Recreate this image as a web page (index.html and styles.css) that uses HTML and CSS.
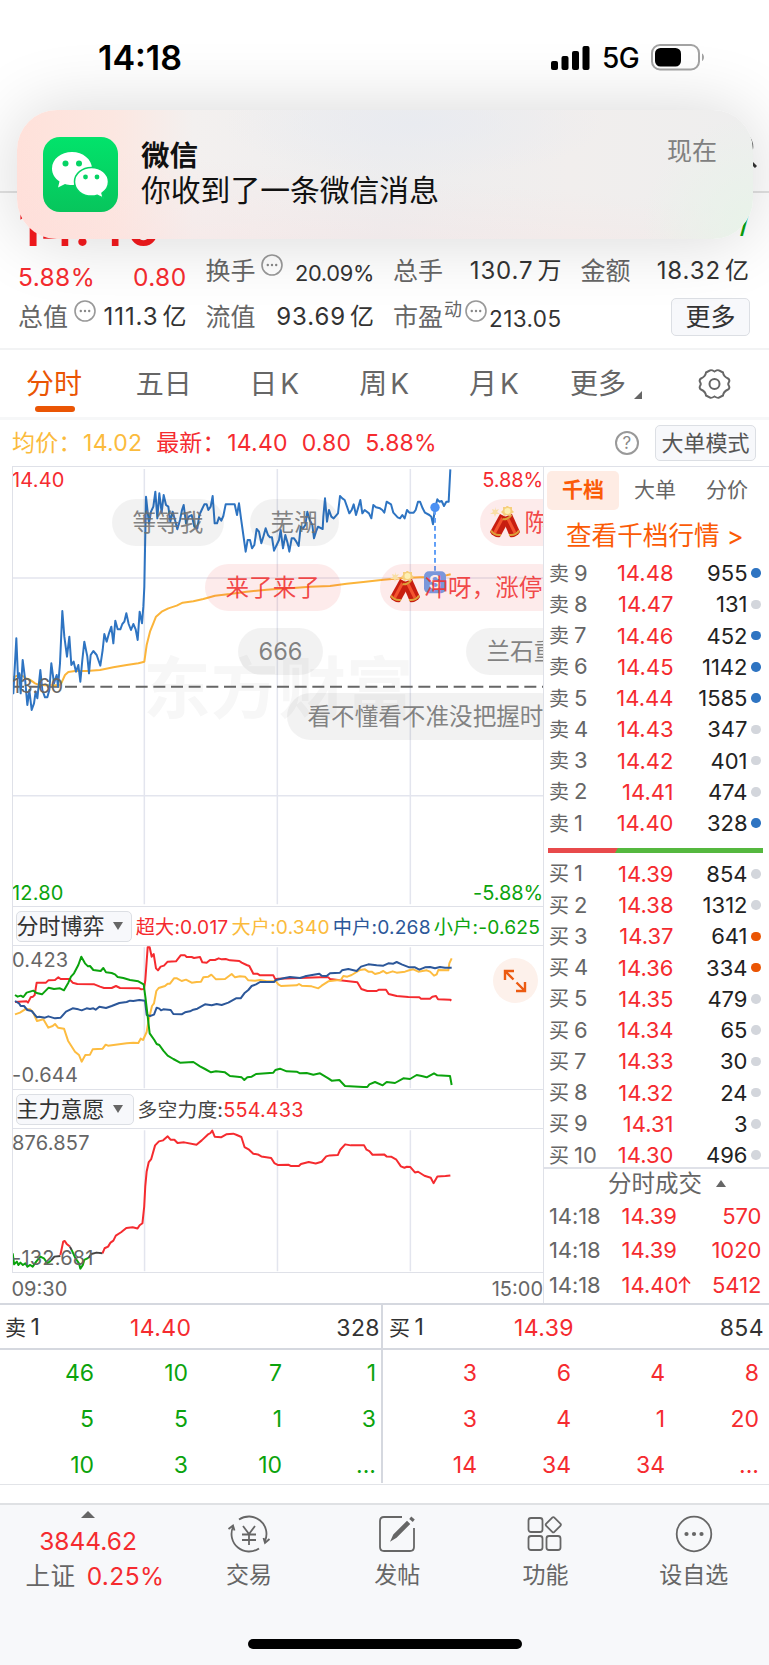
FILE: index.html
```html
<!DOCTYPE html>
<html lang="zh-CN">
<head>
  <meta charset="UTF-8" />
  <title>分时行情</title>
  <link rel="stylesheet" href="styles.css">
</head>
<body>
  <svg class="defs">
    <symbol id="dots" viewBox="0 0 22 22">
      <circle cx="11" cy="11" r="10" fill="none" stroke="#999" stroke-width="1.6" />
      <circle cx="6.8" cy="11" r="1.2" fill="#888" /><circle cx="11" cy="11" r="1.2" fill="#888" /><circle cx="15.2" cy="11" r="1.2" fill="#888" />
    </symbol>
    <symbol id="cracker" viewBox="0 0 30 32">
      <path d="M5 1l1 3 3-1-2 3 3 2-4 0-1 3-1-3-4 0 3-2-1-3 3 1z" fill="#f9dfa6" />
      <path d="M10 8l10 5-10 18c-3 1-8-1-10-5z" fill="#c81e10" />
      <path d="M12.500 12l-8 15" stroke="#f4532f" stroke-width="3" />
      <path d="M1 24.500c2 3.500 6 5 10 4.500" fill="none" stroke="#dda03a" stroke-width="2" />
      <path d="M12 12l10-4 8 18c-2 4-7 6-10 5z" fill="#c81e10" />
      <path d="M18 13l7 14" stroke="#f4532f" stroke-width="3" />
      <path d="M29 24.500c-2 3.500-6 5-10 4.500M12.500 13c3 1 7-1 9-4" fill="none" stroke="#dda03a" stroke-width="2" />
      <path d="M17 -1l2 2 3 0 0 3 2 2-3 2-1 2-3-1-3 1-1-2-2-2 2-2 0-3 3 0z" fill="#f6cf7c" />
      <circle cx="17.500" cy="5" r="3" fill="#fdf0b4" />
    </symbol>
  </svg>

  <header>
    <div class="status">
      <span class="clock">14:18</span>
      <svg class="signal" width="39" height="24" viewBox="0 0 39 24"><rect x="0" y="15" width="7" height="9" rx="2" /><rect x="10.500" y="10" width="7" height="14" rx="2" /><rect x="21" y="5" width="7" height="19" rx="2" /><rect x="31.500" y="0" width="7" height="24" rx="2" /></svg>
      <span class="net">5G</span>
      <svg class="battery" width="55" height="27" viewBox="0 0 55 27"><rect x="1" y="1" width="47" height="24.500" rx="8" fill="none" stroke="#a3a3a3" stroke-width="2" /><rect x="4" y="4" width="26" height="18.500" rx="5.500" /><path d="M51 9.500c2.600 1 2.600 6.500 0 7.500z" fill="#a3a3a3" /></svg>
    </div>
    <div class="titlebar">
      <svg width="40" height="46" viewBox="0 0 40 46"><circle cx="19" cy="18" r="16" fill="none" stroke="#333" stroke-width="2.500" /><path d="M30 29l9 9" stroke="#333" stroke-width="3" /></svg>
    </div>
    <div class="last"><span>14.40</span><i>/</i></div>
    <div class="stats">
      <div class="cell red low"><span>5.88%</span><span>0.80</span></div>
      <div class="cell"><label>换手<svg class="dots up"><use href="#dots" /></svg></label><span class="small">20.09%</span></div>
      <div class="cell"><label>总手</label><span>130.7<em>万</em></span></div>
      <div class="cell"><label>金额</label><span>18.32<em>亿</em></span></div>
      <div class="cell"><label>总值<svg class="dots"><use href="#dots" /></svg></label><span>111.3<em>亿</em></span></div>
      <div class="cell"><label>流值</label><span>93.69<em>亿</em></span></div>
      <div class="cell"><label>市盈<sup>动</sup><svg class="dots pe"><use href="#dots" /></svg></label><span class="small wide">213.05</span></div>
      <div class="cell end"><button class="more">更多</button></div>
    </div>
  </header>

  <div class="notice">
    <svg class="wechat" width="75" height="75" viewBox="0 0 75 75">
      <defs><linearGradient id="wx" x1="0" y1="0" x2="0" y2="1"><stop offset="0" stop-color="#02e36b" /><stop offset="1" stop-color="#07c55c" /></linearGradient></defs>
      <rect width="75" height="75" rx="17" fill="url(#wx)" />
      <path d="M29 15c-11 0-20 7-20 16.500 0 5.500 3 10 7.500 13L15 50.500l7-3.500c2 .6 4.500 1 7 1 11 0 20-7.500 20-16.500S40 15 29 15z" fill="#fff" />
      <path d="M48.500 30.500c-9.500 0-17 6.300-17 14.300s7.500 14.300 17 14.300c2 0 4-.3 5.800-.9l6 3-1.300-5c4-2.700 6.500-6.800 6.500-11.400 0-8-7.500-14.300-17-14.300z" fill="#fff" stroke="#05d364" stroke-width="1.500" />
      <g fill="#05d364"><circle cx="22.500" cy="26.500" r="3" /><circle cx="36" cy="26.500" r="3" /><circle cx="42.500" cy="40" r="2.400" /><circle cx="54" cy="40" r="2.400" /></g>
    </svg>
    <div class="msg"><b>微信</b><p>你收到了一条微信消息</p></div>
    <time>现在</time>
  </div>

  <nav class="tabs">
    <a class="on">分时</a><a>五日</a><a class="k">日K</a><a class="k">周K</a><a class="k">月K</a><a>更多<i class="corner"></i></a>
    <a><svg width="33" height="32" viewBox="0 0 33 32" fill="none" stroke="#666" stroke-width="2"><path d="M12 2.500Q13 1.500 16.500 3.500 20 1.500 21 2.500L25 4.500Q25.500 8.500 30 10.500 32 11.500 31 14 29.500 16 31 18 32 20.500 30 21.500 25.500 23.500 25 27.500L21 29.500Q20 30.500 16.500 28.500 13 30.500 12 29.500L8 27.500Q7.500 23.500 3 21.500 1 20.500 2 18 3.500 16 2 14 1 11.500 3 10.500 7.500 8.500 8 4.500Z" /><circle cx="16.500" cy="16" r="5" /></svg></a>
  </nav>

  <div class="legend">
    <span class="avg">均价：<u>14.02</u></span>
    <span class="red">最新：<u>14.40</u></span><span class="red">0.80</span><span class="red">5.88%</span>
    <span class="help">?</span>
    <button class="mode">大单模式</button>
  </div>

  <main>
    <section class="charts">
      <div class="plot price">
        <svg viewBox="36 18 1596 1320">
          <text class="mark" x="430" y="760" textLength="810">东方财富</text>
          <path class="grid" d="M433 27V1333M832 27V1333M1231 27V1333M36 354H1632M36 1007H1632" />
          <path d="M36 680H1632" stroke="#666" stroke-width="6" stroke-dasharray="36 17" />
          <polyline class="line" stroke="#fbb43a" points="40,652 50,648 58,645 68,648 78,655 88,658 98,665 105,670 115,674 135,676 160,676 180,676 186,665 195,645 205,636 225,633 260,633 300,630 340,622 380,615 415,610 433,605 440,555 450,515 460,490 468,470 485,455 505,445 530,437 548,428 580,424 610,417 645,407 690,402 740,395 800,389 840,386 880,384 930,380 990,378 1040,371 1090,366 1150,359 1210,354 1260,352 1300,352 1340,346 1352,343" />
          <polyline class="line" stroke="#2e74c2" points="40,655 40,700 49,535 54,655 58,640 62,700 68,600 75,655 82,735 88,690 95,750 102,730 107,695 112,715 121,630 127,690 135,712 142,712 148,690 154,610 162,670 170,645 174,680 180,610 187,453 193,530 201,590 208,530 214,615 221,605 228,635 235,615 241,665 247,600 253,545 262,590 267,640 272,585 280,573 290,585 301,617 308,570 313,522 320,545 327,520 334,500 340,550 346,482 353,508 361,508 367,492 373,485 379,460 386,492 393,510 400,492 407,508 413,540 419,455 426,490 430,440 433,380 438,110 444,165 447,190 453,155 460,140 466,95 472,175 478,100 485,158 491,105 498,135 505,140 511,185 518,155 525,180 532,208 540,180 546,150 551,135 558,190 566,170 575,165 583,200 592,205 598,165 605,150 613,133 620,133 625,150 632,140 638,108 644,190 651,190 657,172 664,182 670,168 677,133 704,133 711,165 717,130 723,175 730,225 737,275 743,240 750,240 756,265 763,255 770,207 777,215 784,250 790,230 797,205 804,225 810,232 816,232 822,272 830,255 837,240 842,210 849,265 856,225 863,250 868,275 875,235 882,235 889,245 896,258 902,200 909,205 916,195 922,155 929,180 937,195 942,235 948,215 954,200 968,207 970,170 975,115 981,185 987,150 994,170 1001,175 1014,160 1020,108 1027,115 1034,120 1041,140 1048,160 1055,150 1061,133 1068,165 1074,145 1081,120 1087,160 1094,150 1107,160 1114,175 1120,135 1128,142 1140,145 1147,150 1153,158 1160,125 1173,133 1180,158 1193,172 1200,175 1207,165 1214,175 1221,150 1228,158 1241,158 1247,150 1254,125 1260,125 1268,145 1275,158 1288,165 1294,170 1299,193 1304,150 1312,118 1318,125 1325,123 1332,138 1339,125 1346,125 1351,28" />
          <path d="M1305 150V335" stroke="#62a0f7" stroke-width="6" stroke-dasharray="14 10" />
          <circle cx="1305" cy="142" r="14" fill="#4a90f3" />
          <rect x="1272" y="334" width="66" height="66" rx="15" fill="#6ea2ee" />
          <text x="1286" y="387" class="flag">S</text>
        </svg>
        <span class="tl red">14.40</span><span class="tr red">5.88%</span>
        <span class="ml">13.60</span>
        <span class="bl green">12.80</span><span class="br green">-5.88%</span>
        <div class="bullets">
          <span style="left:99px; top:32px">等等我</span>
          <span style="left:237px; top:32px">芜湖</span>
          <span class="hot gift" style="left:467px; top:32px"><svg><use href="#cracker" /></svg>陈小群</span>
          <span class="hot" style="left:192px; top:97px">来了来了</span>
          <span class="hot gift" style="left:367px; top:97px"><svg><use href="#cracker" /></svg>冲呀，涨停</span>
          <span style="left:225px; top:161px">666</span>
          <span style="left:453px; top:161px">兰石重装</span>
          <span style="left:274px; top:226px">看不懂看不准没把握时</span>
        </div>
      </div>

      <div class="bar">
        <button class="pick">分时博弈<i></i></button>
        <span class="red">超大:0.017</span><span class="avg">大户:0.340</span><span class="navy">中户:0.268</span><span class="green">小户:-0.625</span>
      </div>
      <div class="plot sub">
        <svg viewBox="36 195 1596 435">
          <path class="grid" d="M433 202V625M832 202V625M1231 202V625" />
          <polyline class="line" stroke="#f52b2f" points="45,366 80,364 84,368 92,352 99,350 104,345 110,308 138,308 145,301 165,300 175,292 182,297 208,297 218,308 232,312 283,313 300,320 312,324 335,324 348,318 360,324 418,325 424,328 432,327 436,300 443,202 449,202 455,230 461,222 468,265 474,271 482,260 492,257 503,245 528,244 542,226 555,226 560,231 575,231 582,234 600,231 607,247 620,248 630,240 645,240 656,235 665,238 677,237 690,241 718,243 725,248 740,255 748,258 760,281 772,281 780,286 820,286 826,298 835,296 960,292 985,292 990,297 1020,301 1072,307 1084,327 1102,333 1130,333 1137,329 1158,329 1166,342 1190,348 1225,351 1258,352 1263,356 1290,356 1297,350 1308,348 1314,358 1350,359 1354,362" />
          <polyline class="line" stroke="#fdbc40" points="45,403 60,398 75,388 90,388 98,395 111,423 130,418 145,443 158,438 165,432 174,443 192,446 204,482 225,515 237,525 245,545 256,525 270,524 278,508 308,506 317,494 324,497 380,490 400,488 415,489 422,476 429,480 440,456 446,420 456,378 462,370 469,333 476,324 495,318 503,311 510,311 522,295 531,295 545,303 558,299 575,308 590,306 603,305 610,292 625,290 634,284 648,298 675,297 695,282 705,292 720,289 735,290 745,301 765,302 780,300 800,304 828,304 835,313 843,318 890,316 897,312 905,317 935,319 955,325 965,317 985,304 1010,301 1022,301 1030,288 1042,290 1055,285 1080,270 1095,268 1105,275 1115,275 1125,282 1140,278 1150,273 1160,280 1178,274 1190,278 1215,275 1230,270 1240,268 1255,275 1280,271 1290,275 1302,287 1310,283 1315,270 1345,271 1348,250 1355,235" />
          <polyline class="line" stroke="#2c5799" points="45,363 57,370 62,378 72,378 82,390 95,393 111,412 118,410 135,413 145,409 165,415 182,413 198,395 218,385 235,388 245,391 260,385 270,387 280,385 287,389 298,380 318,384 335,378 358,369 380,366 390,362 400,363 418,360 435,362 440,405 450,408 462,404 470,383 478,386 483,391 490,388 512,390 520,402 545,403 555,397 570,394 580,389 592,386 615,373 635,376 650,372 665,375 685,368 708,355 722,355 733,340 745,330 755,318 768,313 780,306 822,306 828,300 850,295 870,291 900,294 915,289 958,281 965,287 980,288 990,280 1020,278 1026,271 1045,267 1070,273 1083,260 1105,253 1130,256 1150,257 1165,250 1180,251 1190,246 1205,253 1228,262 1245,262 1258,269 1275,262 1290,261 1305,265 1320,261 1335,263 1355,263" />
          <polyline class="line" stroke="#0ba30d" points="45,345 53,350 62,347 70,351 80,338 100,332 110,339 126,343 146,323 162,327 180,325 192,331 205,308 213,290 222,280 235,255 244,230 255,250 264,259 270,258 280,270 302,273 310,264 318,277 335,279 345,283 353,291 370,294 390,300 415,304 431,313 436,350 442,400 449,460 463,480 470,492 478,495 490,512 503,527 520,537 540,548 580,546 600,559 615,567 633,577 648,574 675,577 690,588 712,590 725,592 733,600 742,592 755,590 768,582 820,578 826,570 840,566 860,574 890,575 900,580 920,579 940,584 960,580 985,595 995,602 1018,600 1035,618 1090,621 1102,621 1108,613 1125,606 1148,616 1160,606 1185,609 1210,595 1230,597 1250,585 1265,588 1280,592 1302,580 1312,586 1350,588 1355,615" />
        </svg>
        <span class="tl">0.423</span><span class="bl">-0.644</span>
        <div class="expand"><svg width="24" height="24" viewBox="0 0 24 24" fill="none" stroke="#ec5b12" stroke-width="2.400"><path d="M2 11V2h9M2 2l8.500 8.500M22 13v9h-9M22 22l-8.500-8.500" /></svg></div>
      </div>

      <div class="bar">
        <button class="pick">主力意愿<i></i></button>
        <span class="dark">多空力度:<b class="red">554.433</b></span>
      </div>
      <div class="plot sub will">
        <svg viewBox="34 115 1517 434" preserveAspectRatio="none">
          <path class="grid" d="M412 122V544M791 122V544M1170 122V544" />
          <polyline class="line" stroke="#0ba30d" points="36,490 40,523 48,515 52,525 58,518 65,525 72,520 78,530 86,525 93,530 103,515 115,500 125,505 135,520 145,512" />
          <polyline class="line" stroke="#444" points="145,512 155,500 172,498" />
          <polyline class="line" stroke="#f52b2f" points="172,495 180,455 184,453 190,462 199,470" />
          <polyline class="line" stroke="#444" points="199,470 204,480" />
          <polyline class="line" stroke="#0ba30d" points="204,480 215,505 225,520 229,536 236,525 240,510 252,504" />
          <polyline class="line" stroke="#444" points="252,504 260,492 275,488 292,490" />
          <polyline class="line" stroke="#f52b2f" points="292,490 298,475 308,470 315,458 323,452 330,437 345,427 360,414 378,412 392,416 398,406 406,400 411,350 414,290 418,245 424,217 431,208 442,167 453,155 465,152 478,140 486,150 497,150 506,160 525,158 560,165 575,152 592,135 600,130 605,123 612,141 630,143 645,134 665,132 675,136 688,142 697,172 710,180 722,192 735,194 745,200 773,205 782,220 793,226 822,225 830,229 852,229 858,223 880,217 900,221 917,216 930,200 940,197 963,196 970,180 984,164 1000,167 1038,167 1045,180 1053,184 1062,195 1095,194 1102,200 1115,201 1130,210 1143,230 1153,234 1160,231 1170,232 1183,248 1192,246 1210,258 1228,264 1236,280 1247,260 1270,259 1284,257" />
        </svg>
        <span class="tl">876.857</span><span class="bl">-132.681</span>
      </div>
      <div class="times"><span>09:30</span><span>15:00</span></div>
    </section>

    <aside>
      <div class="modes"><b>千档</b><span>大单</span><span>分价</span></div>
      <div class="all">查看千档行情 <span>&gt;</span></div>
      <ul class="book">
        <li><span>卖<u>9</u></span><b>14.48</b><em>955</em><i class="blue"></i></li>
        <li><span>卖<u>8</u></span><b>14.47</b><em>131</em><i></i></li>
        <li><span>卖<u>7</u></span><b>14.46</b><em>452</em><i class="blue"></i></li>
        <li><span>卖<u>6</u></span><b>14.45</b><em>1142</em><i class="blue"></i></li>
        <li><span>卖<u>5</u></span><b>14.44</b><em>1585</em><i class="blue"></i></li>
        <li><span>卖<u>4</u></span><b>14.43</b><em>347</em><i></i></li>
        <li><span>卖<u>3</u></span><b>14.42</b><em>401</em><i></i></li>
        <li><span>卖<u>2</u></span><b>14.41</b><em>474</em><i></i></li>
        <li><span>卖<u>1</u></span><b>14.40</b><em>328</em><i class="blue"></i></li>
      </ul>
      <div class="ratio"></div>
      <ul class="book buy">
        <li><span>买<u>1</u></span><b>14.39</b><em>854</em><i></i></li>
        <li><span>买<u>2</u></span><b>14.38</b><em>1312</em><i></i></li>
        <li><span>买<u>3</u></span><b>14.37</b><em>641</em><i class="orange"></i></li>
        <li><span>买<u>4</u></span><b>14.36</b><em>334</em><i class="orange"></i></li>
        <li><span>买<u>5</u></span><b>14.35</b><em>479</em><i></i></li>
        <li><span>买<u>6</u></span><b>14.34</b><em>65</em><i></i></li>
        <li><span>买<u>7</u></span><b>14.33</b><em>30</em><i></i></li>
        <li><span>买<u>8</u></span><b>14.32</b><em>24</em><i></i></li>
        <li><span>买<u>9</u></span><b>14.31</b><em>3</em><i></i></li>
        <li><span>买<u>10</u></span><b>14.30</b><em>496</em><i></i></li>
      </ul>
      <div class="deals-title">分时成交<i></i></div>
      <ul class="deals">
        <li><span>14:18</span><b>14.39</b><em>570</em></li>
        <li><span>14:18</span><b>14.39</b><em>1020</em></li>
        <li><span>14:18</span><b>14.40<svg width="13" height="17" viewBox="0 0 13 17" fill="none" stroke="#f52b2f" stroke-width="1.800"><path d="M6.500 17V2M1 7.500l5.500-6 5.500 6" /></svg></b><em>5412</em></li>
      </ul>
    </aside>
  </main>

  <div class="queue">
    <div class="side">
      <div class="head"><span>卖<u>1</u></span><b>14.40</b><em>328</em></div>
      <div class="nums green"><span>46</span><span>10</span><span>7</span><span>1</span><span>5</span><span>5</span><span>1</span><span>3</span><span>10</span><span>3</span><span>10</span><span>...</span></div>
    </div>
    <div class="side">
      <div class="head"><span>买<u>1</u></span><b>14.39</b><em>854</em></div>
      <div class="nums red"><span>3</span><span>6</span><span>4</span><span>8</span><span>3</span><span>4</span><span>1</span><span>20</span><span>14</span><span>34</span><span>34</span><span>...</span></div>
    </div>
  </div>

  <footer>
    <div class="tabbar">
      <div class="index"><i></i><b>3844.62</b><span>上证 <em>0.25%</em></span></div>
      <div class="item"><svg width="44" height="38" viewBox="0 0 44 38"><path d="M12 4.600A17.500 17.500 0 0 1 38 26M32 33.400A17.500 17.500 0 0 1 6 12M1.500 14l4.500-3.500 1.500 5M42.500 24l-4.500 4-1.500-5" /><path d="M16 11l6 8 6-8M15 19.500h14M15 25h14M22 19v11" /></svg><span>交易</span></div>
      <div class="item"><svg width="38" height="38" viewBox="0 0 38 38"><path d="M24 2H6q-4 0-4 4v26q0 4 4 4h26q4 0 4-4V13" /><path d="M14 24.500L16 20 29 7 31 9 18 22z" fill="#666" /><path d="M33 5.500l2-2.500" stroke-width="4.500" /></svg><span>发帖</span></div>
      <div class="item"><svg width="36" height="38" viewBox="0 0 36 38"><rect x="1.500" y="3" width="14" height="14" rx="2.500" /><rect x="1.500" y="21" width="14" height="14" rx="2.500" /><rect x="19.500" y="21" width="14" height="14" rx="2.500" /><rect x="20.500" y="4" width="11.500" height="11.500" rx="1.500" transform="rotate(45 26.300 9.800)" /></svg><span>功能</span></div>
      <div class="item"><svg width="38" height="38" viewBox="0 0 38 38"><circle cx="19" cy="19" r="17.300" /><g fill="#666" stroke="none"><circle cx="11.500" cy="19" r="2.100" /><circle cx="19" cy="19" r="2.100" /><circle cx="26.500" cy="19" r="2.100" /></g></svg><span>设自选</span></div>
    </div>
    <div class="home"></div>
  </footer>
</body>
</html>
```
FILE: styles.css
```css
* {
  box-sizing: border-box;
}
body {
  margin: 0;
  width: 769px;
  height: 1665px;
  position: relative;
  overflow: hidden;
  background: #fff;
  color: #333;
  font-family: Inter, "Noto Sans CJK SC", sans-serif;
  font-size: 22px;
  line-height: 30px;
}
ul, p {
  margin: 0;
  padding: 0;
  list-style: none;
}
i, em {
  font-style: normal;
}
u {
  text-decoration: none;
}
button {
  font: inherit;
  padding: 0;
  color: #333;
  background: #f7f8fb;
  border: 1.5px solid #dcdfe4;
  border-radius: 5px;
  white-space: nowrap;
}
.defs {
  position: absolute;
  width: 0;
  height: 0;
}
.red { color: #f52b2f; }
.green { color: #0ba30d; }
.avg { color: #fbbb3c; }
.navy { color: #2c5799; }
.dark { color: #444; }

/* 顶部 */
header {
  height: 350px;
  border-bottom: 2px solid #f2f3f4;
}
.status {
  height: 110px;
  padding: 42px 0 0 98px;
  display: flex;
  align-items: flex-start;
  color: #000;
}
.clock {
  width: 453px;
  font-size: 34px;
  font-weight: 600;
  line-height: 32px;
}
.signal {
  margin-top: 4px;
}
.net {
  width: 47px;
  margin-left: 12px;
  font-size: 28px;
  font-weight: 500;
  letter-spacing: -0.5px;
  line-height: 33px;
}
.battery {
  margin: 2px 0 0 2px;
}
.titlebar {
  height: 83px;
  padding: 19px 12px 0 0;
  text-align: right;
  border-bottom: 2px solid #e2e2e2;
}
.last {
  height: 58px;
  padding: 0 18px 0 18px;
  display: flex;
  justify-content: space-between;
  color: #f71a1e;
  font-size: 53px;
  font-weight: 600;
  line-height: 69px;
}
.last i {
  color: #0ba30d;
  font-size: 32px;
  font-weight: 400;
  line-height: 56px;
}
.stats {
  padding: 0 18px 0 18px;
  display: grid;
  grid-template-columns: repeat(4, 168.5px);
  grid-template-rows: 40px 52px;
  column-gap: 19px;
}
.cell {
  display: flex;
  justify-content: space-between;
  align-items: center;
  font-size: 24px;
  letter-spacing: 0.9px;
  white-space: nowrap;
}
.cell em {
  margin-left: 4px;
  letter-spacing: 0;
}
.cell label {
  position: relative;
  color: #666;
  font-size: 25px;
  letter-spacing: 0;
}
.cell.low {
  padding-top: 12px;
  font-size: 24.5px;
  letter-spacing: 0.4px;
}
.cell.end {
  justify-content: flex-end;
}
.cell .small {
  font-size: 21.8px;
  letter-spacing: -0.3px;
  padding-top: 3px;
}
.cell .wide {
  font-size: 22.5px;
  letter-spacing: 0.4px;
}
.dots {
  position: absolute;
  left: 56px;
  top: -2px;
  width: 22px;
  height: 22px;
}
.dots.up {
  left: 55px;
}
.dots.pe {
  left: 72px;
}
.cell sup {
  position: absolute;
  left: 51px;
  top: -7px;
  font-size: 18px;
}
.more {
  width: 79px;
  height: 38px;
  margin-right: -1px;
  font-size: 25px;
  letter-spacing: 0;
}

/* 通知 */
.notice {
  position: absolute;
  left: 17px;
  top: 110px;
  width: 736px;
  height: 129px;
  padding: 27px 36px 0 26px;
  display: flex;
  align-items: flex-start;
  border-radius: 40px;
  background:
    radial-gradient(circle at 100% 90%, #e8f3e9 0, rgba(232, 243, 233, 0) 110px),
    radial-gradient(ellipse at 54% 10%, #e9ebf0 0, rgba(233, 235, 240, 0) 190px),
    linear-gradient(5deg, rgba(255, 218, 218, 0.3), rgba(255, 230, 220, 0) 50%),
    linear-gradient(90deg, #ffe1da 0, #fce7e1 13%, #f3f0ef 24%, #ededee 50%, #f1eeed 75%, #eeeeee 100%);
  box-shadow: 0 0 70px rgba(0, 0, 0, 0.16);
  color: #111;
}
.msg {
  margin-left: 23px;
  flex: 1;
}
.msg b {
  display: block;
  font-size: 28.5px;
  line-height: 37px;
}
.msg p {
  font-size: 29.8px;
  line-height: 33px;
}
.notice time {
  color: #808080;
  font-size: 25px;
  line-height: 29px;
}

/* 周期 */
.tabs {
  height: 70px;
  display: grid;
  grid-template-columns: repeat(7, 109.9px);
  border-bottom: 3px solid #f6f7f8;
}
.tabs a {
  position: relative;
  display: flex;
  justify-content: center;
  align-items: center;
  padding: 1px 2px 0 0;
  color: #666;
  font-size: 28px;
}
.tabs .k {
  padding-left: 4px;
  letter-spacing: 3px;
}
.tabs .on {
  color: #ea5504;
}
.tabs .on::after {
  content: "";
  position: absolute;
  left: 35px;
  top: 56px;
  width: 40px;
  height: 6px;
  border-radius: 3px;
  background: #ea5504;
}
.tabs .corner {
  margin: 21px -14px 0 8px;
  border-left: 8px solid transparent;
  border-bottom: 8px solid #666;
}
.tabs a:nth-child(6) {
  padding-right: 11px;
}
.tabs a:last-child {
  padding: 0;
}
.legend {
  height: 46px;
  padding: 0 13px 0 12px;
  display: flex;
  align-items: center;
  gap: 14px;
  font-size: 23px;
  letter-spacing: 0.2px;
}
.legend u {
  margin-left: 1.5px;
}
.help {
  width: 24px;
  height: 24px;
  margin-left: auto;
  margin-right: 2px;
  border: 2px solid #999;
  border-radius: 50%;
  color: #888;
  font-size: 17px;
  line-height: 21px;
  text-align: center;
}
.mode {
  width: 101px;
  height: 36px;
  color: #555;
  font-size: 22px;
  letter-spacing: 0;
}

/* 图表 */
main {
  height: 837px;
  display: flex;
}
.charts {
  width: 544px;
  padding-left: 11.5px;
  border-right: 1px solid #dfe1e8;
  color: #666;
}
.plot {
  position: relative;
  overflow: hidden;
  border: solid #dfe1e8;
  border-width: 1.5px 0 1.5px 1.5px;
}
.plot > svg {
  display: block;
  position: absolute;
  left: -1px;
  top: -1px;
  width: 532px;
  height: 100%;
}
.price {
  height: 441px;
}
.price > svg {
  height: 440px;
}
.sub {
  height: 145px;
}
.sub > svg {
  height: 145px;
}
.plot > span {
  position: absolute;
  line-height: 24px;
  font-size: 20px;
  letter-spacing: 0.2px;
}
.plot > .tl { left: -0.5px; top: 1px; }
.plot > .tr { right: 0; top: 1px; letter-spacing: -0.1px; }
.plot > .ml { left: -0.5px; top: 207px; }
.plot > .bl { left: -0.5px; bottom: 1px; }
.plot > .br { right: 0; bottom: 1px; letter-spacing: -0.1px; }
.sub > .tl { top: 2px; }
.sub > .bl { bottom: 2px; }
.grid {
  fill: none;
  stroke: #e3e5ee;
  stroke-width: 1.5;
  vector-effect: non-scaling-stroke;
}
.line {
  fill: none;
  stroke-width: 2;
  stroke-linejoin: round;
  vector-effect: non-scaling-stroke;
}
.mark {
  fill: #f7f7f7;
  font-size: 202px;
  font-weight: 700;
}
.flag {
  fill: #fff;
  font-size: 56px;
  font-weight: 600;
}
.bullets span {
  position: absolute;
  height: 47px;
  padding: 0 21px;
  border-radius: 24px;
  background: rgba(0, 0, 0, 0.05);
  color: rgba(110, 110, 110, 0.85);
  font-size: 23.6px;
  line-height: 47px;
  white-space: nowrap;
}
.bullets .hot {
  background: rgba(240, 60, 60, 0.1);
  color: rgba(240, 50, 50, 0.88);
}
.bullets .gift {
  padding-left: 10px;
  display: flex;
}
.gift svg {
  width: 30px;
  height: 32px;
  margin: 7px 5px 0 0;
}
.bar {
  height: 38px;
  padding: 0 0 0 3px;
  display: flex;
  align-items: center;
  border-left: 1.5px solid #dfe1e8;
  font-size: 19.2px;
  white-space: nowrap;
}
.bar span {
  margin-right: 3px;
  padding-top: 1px;
  letter-spacing: 0.18px;
}
.bar .dark {
  font-size: 19.8px;
}
.bar b {
  font-weight: 400;
}
.pick {
  width: 118px;
  height: 31px;
  margin-right: 4px;
  font-size: 22px;
  line-height: 26px;
  text-align: left;
}
.pick i {
  display: inline-block;
  margin-left: 8px;
  border: 5px solid transparent;
  border-top: 8px solid #666;
  border-bottom: 0;
  vertical-align: 4px;
}
.expand {
  position: absolute;
  left: 480px;
  top: 12px;
  width: 45px;
  height: 45px;
  padding: 10.5px;
  border-radius: 50%;
  background: #fdf1eb;
}
.expand svg {
  display: block;
}
.times {
  height: 30px;
  display: flex;
  justify-content: space-between;
  font-size: 20px;
  line-height: 32px;
}

/* 盘口 */
aside {
  flex: 1;
  border-top: 1.5px solid #dfe1e8;
}
.modes {
  height: 43px;
  padding: 4px 0 0 3px;
  display: flex;
  color: #666;
  font-size: 21px;
  line-height: 38px;
  text-align: center;
}
.modes b {
  width: 72px;
  border-radius: 5px;
  background: #feece4;
  color: #fb5b06;
}
.modes span {
  width: 72px;
}
.all {
  height: 47.5px;
  padding-left: 22px;
  color: #fb5b06;
  font-size: 25.6px;
  line-height: 52px;
}
.book li {
  height: 31.25px;
  padding-left: 5px;
  display: flex;
  align-items: center;
}
.book span {
  width: 61.5px;
  color: #666;
  font-size: 20px;
}
.book u {
  margin-left: 5px;
  font-size: 22px;
}
.book b {
  width: 63px;
  color: #f52b2f;
  font-weight: 400;
  text-align: right;
}
.book em {
  width: 74px;
  color: #222;
  text-align: right;
}
.book i {
  width: 9.5px;
  height: 9.5px;
  margin-left: 3.5px;
  border-radius: 50%;
  background: #d3d6dc;
}
.book .blue { background: #2e74c2; }
.book .orange { background: #ea5504; }
.ratio {
  width: 215px;
  height: 5px;
  margin: 9px 0 5.5px 4px;
  background: linear-gradient(120deg, #e84a4b 60px, #55b83f 61px);
}
.buy {
  height: 309px;
}
.deals-title {
  height: 31px;
  border-top: 2px solid #dfe1e8;
  color: #666;
  font-size: 23.5px;
  padding-left: 64px;
}
.deals-title i {
  display: inline-block;
  margin-left: 14px;
  border: 5px solid transparent;
  border-top: 0;
  border-bottom: 7px solid #666;
  vertical-align: 5px;
}
.deals li {
  height: 34.5px;
  padding: 0 7.5px 0 5px;
  display: flex;
  align-items: center;
  color: #f52b2f;
}
.deals span {
  width: 72.5px;
  color: #666;
  letter-spacing: -0.1px;
}
.deals b {
  font-weight: 400;
}
.deals em {
  margin-left: auto;
}

/* 五档明细 */
.queue {
  height: 182px;
  display: grid;
  grid-template-columns: 383px 386px;
  grid-template-rows: 178px;
  border-top: 2px solid #d5d8df;
  border-bottom: 1.5px solid #e2e4e8;
}
.side:first-child {
  border-right: 2px solid #d5d8df;
}
.head {
  height: 45px;
  padding: 2px 1px 0 5px;
  display: flex;
  align-items: center;
  border-bottom: 2px solid #d5d8df;
  font-size: 23px;
  letter-spacing: 0.4px;
}
.side:last-child .head {
  padding-left: 6px;
  padding-right: 5px;
}
.head span {
  width: 125px;
  font-size: 21px;
}
.head u {
  margin-left: 4px;
  font-size: 23px;
}
.head b {
  color: #f52b2f;
  font-weight: 400;
}
.head em {
  margin-left: auto;
}
.nums {
  height: 131px;
  display: grid;
  grid-template-columns: repeat(4, 94px);
  grid-auto-rows: 46px;
  line-height: 46px;
  text-align: right;
}
.nums span {
  font-size: 23px;
}

/* 底部 */
footer {
  height: 162px;
  margin-top: 18px;
  border-top: 2px solid #dfe1e4;
  background: #f7f8fa;
  color: #666;
}
.tabbar {
  height: 134px;
  display: flex;
}
.index, .item {
  width: 148.2px;
  display: flex;
  flex-direction: column;
  align-items: center;
}
.index {
  width: 175px;
  padding: 6px 0 0 15px;
  font-size: 24.5px;
}
.index i {
  margin-right: 14px;
  border: 7px solid transparent;
  border-top: 0;
  border-bottom: 7px solid #666;
}
.index b {
  margin: 8px 14px 5px 0;
  color: #f52b2f;
  font-weight: 400;
}
.index span {
  letter-spacing: 0.4px;
}
.index em {
  margin-left: 4px;
  color: #f52b2f;
}
.item {
  padding-top: 10px;
  font-size: 23px;
}
.item svg {
  margin-bottom: 7px;
  overflow: visible;
  fill: none;
  stroke: #666;
  stroke-width: 1.8;
}
.home {
  width: 274px;
  height: 10px;
  margin: 0 auto;
  border-radius: 5px;
  background: #000;
}
```
